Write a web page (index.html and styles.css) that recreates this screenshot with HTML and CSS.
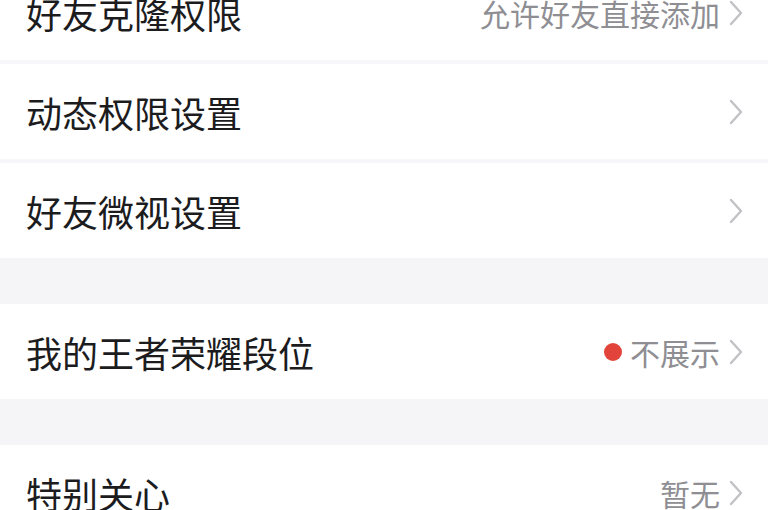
FILE: index.html
```html
<!DOCTYPE html>
<html lang="zh-CN">
<head>
<meta charset="utf-8">
<link rel="stylesheet" href="styles.css">
</head>
<body>
<div class="page">
  <section class="group group-first">
    <div class="row">
      <span class="label">好友克隆权限</span>
      <span class="value">允许好友直接添加<svg class="chev" viewBox="0 0 16 28"><polyline points="3,3 13,14 3,25"/></svg></span>
    </div>
    <div class="row">
      <span class="label">动态权限设置</span>
      <span class="value"><svg class="chev" viewBox="0 0 16 28"><polyline points="3,3 13,14 3,25"/></svg></span>
    </div>
    <div class="row">
      <span class="label">好友微视设置</span>
      <span class="value"><svg class="chev" viewBox="0 0 16 28"><polyline points="3,3 13,14 3,25"/></svg></span>
    </div>
  </section>
  <section class="group">
    <div class="row">
      <span class="label">我的王者荣耀段位</span>
      <span class="value"><i class="dot"></i>不展示<svg class="chev" viewBox="0 0 16 28"><polyline points="3,3 13,14 3,25"/></svg></span>
    </div>
  </section>
  <section class="group">
    <div class="row">
      <span class="label">特别关心</span>
      <span class="value">暂无<svg class="chev" viewBox="0 0 16 28"><polyline points="3,3 13,14 3,25"/></svg></span>
    </div>
  </section>
</div>
</body>
</html>
```

FILE: styles.css
```css
html, body {
  margin: 0;
  padding: 0;
  background: #f5f5f7;
  overflow: hidden;
}
body {
  font-family: "Noto Sans CJK SC", "Noto Sans", sans-serif;
}
.page {
  display: flex;
  flex-direction: column;
  gap: 46px;
}
.group {
  display: flex;
  flex-direction: column;
  gap: 4px;
  background: #f7f7f9;
}
.group-first {
  margin-top: -35px;
}
.row {
  height: 95px;
  background: #ffffff;
  display: flex;
  align-items: center;
  justify-content: space-between;
  padding: 0 24px 0 26px;
}
.label {
  font-size: 36px;
  color: #1c1c1e;
  line-height: 1;
}
.value {
  display: flex;
  align-items: center;
  font-size: 30px;
  color: #8e8e93;
  line-height: 1;
}
.dot {
  width: 18px;
  height: 18px;
  border-radius: 50%;
  background: #e2443b;
  margin-right: 8px;
}
.chev {
  width: 16px;
  height: 28px;
  margin-left: 8px;
  fill: none;
  stroke: #c2c2c6;
  stroke-width: 2.4;
  stroke-linecap: round;
  stroke-linejoin: round;
}
```
